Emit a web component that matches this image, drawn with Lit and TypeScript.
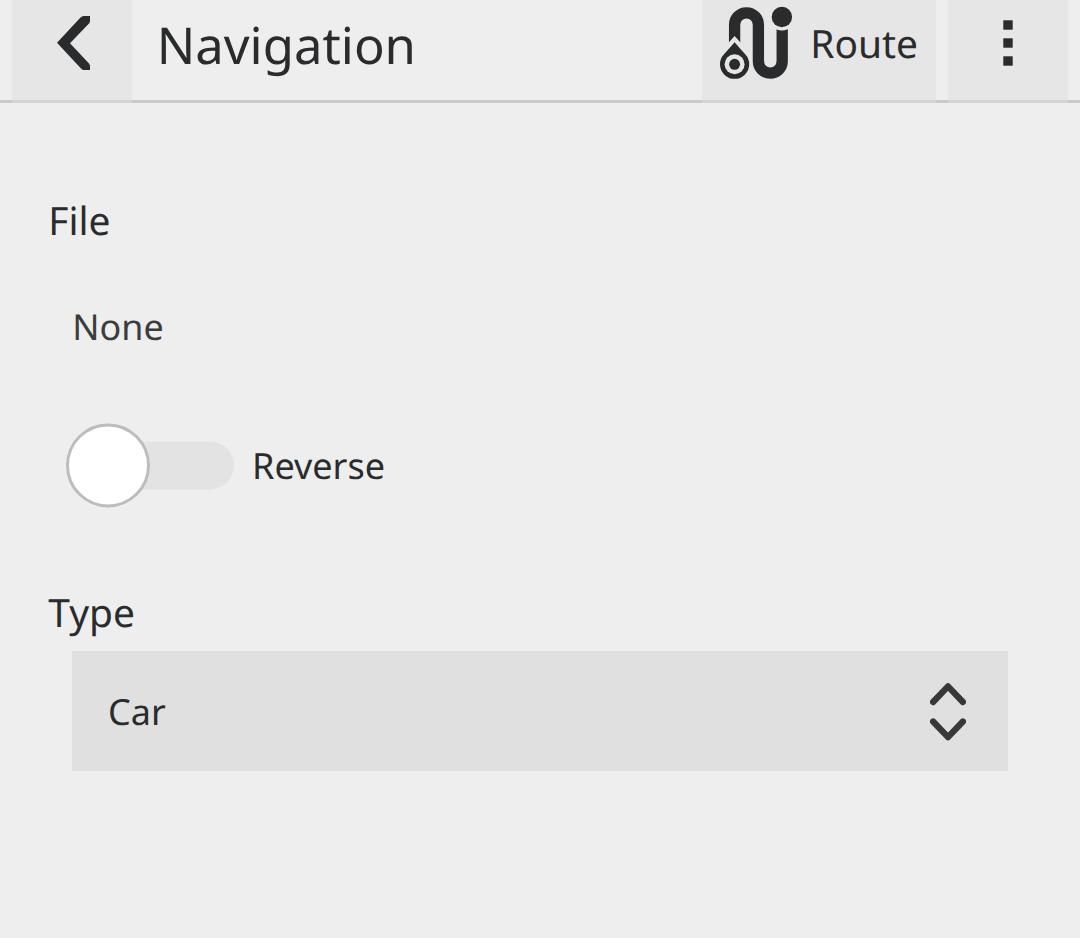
import { LitElement, html, css } from "lit";
import { customElement, property } from "lit/decorators.js";

const backIcon = html`<svg width="120" height="100" viewBox="0 0 120 100">
  <path d="M78 16H71.5Q70 16 68.500 17.500L45 42.700L69 68.500Q70.500 70 72 70H78V65.500L77 63.500L58 43.200L77.500 23L78 21Z" fill="#292b2c"/>
</svg>`;

const routeIcon = html`<svg width="92" height="100" viewBox="0 0 92 100">
  <path d="M32.600 43V24.700a11.900 11.900 0 0 1 23.800 0V61.300a11.900 11.900 0 0 0 23.800 0V28" fill="none" stroke="#292b2c" stroke-width="11.300"/>
  <path d="M24 45.400L32.600 36L41.200 45.400V50H24Z" fill="#e6e6e6"/>
  <path d="M32.600 42.300Q37 47.500 43.200 54.200A14.600 14.600 0 1 1 22 54.200Q28.200 47.500 32.600 42.300Z" fill="#292b2c"/>
  <circle cx="32.600" cy="64.300" r="10" fill="#e6e6e6"/>
  <circle cx="32.600" cy="64.300" r="5.500" fill="#292b2c"/>
  <circle cx="79.900" cy="17" r="13.500" fill="#e6e6e6"/>
  <circle cx="79.900" cy="17" r="10.200" fill="#292b2c"/>
</svg>`;

const moreIcon = html`<svg width="120" height="100" viewBox="0 0 120 100" fill="#292b2c">
  <rect x="55.300" y="20.300" width="9.400" height="9.400"/>
  <rect x="55.300" y="38.300" width="9.400" height="9.400"/>
  <rect x="55.300" y="56.300" width="9.400" height="9.400"/>
</svg>`;

const sortIcon = html`<svg width="36" height="60" viewBox="0 0 36 60" fill="none" stroke="#363839" stroke-width="6.300" stroke-linecap="round" stroke-linejoin="round">
  <path d="M3.100 21L18 5.400L32.900 21"/>
  <path d="M3.100 40.500L18 56.200L32.900 40.500"/>
</svg>`;

@customElement("tool-button")
class ToolButton extends LitElement {
  static styles = css`
    :host {
      display: flex;
      box-sizing: border-box;
      height: 103px;
      background: #e6e6e6;
      border-bottom: 3px solid #d3d3d3;
      overflow: hidden;
    }
  `;
  render() {
    return html`<slot></slot>`;
  }
}

@customElement("toggle-switch")
class ToggleSwitch extends LitElement {
  @property() label = "";
  static styles = css`
    :host { display: flex; align-items: center; height: 84px; }
    svg { display: block; flex: none; }
    .label { margin-left: 18px; padding-top: 1px; font-size: 36px; line-height: 50px; }
  `;
  render() {
    return html`<svg width="168" height="85" viewBox="0 0 168 85">
        <rect x="40" y="18.400" width="128" height="48" rx="24" fill="#e3e3e3"/>
        <circle cx="42" cy="42.400" r="40.500" fill="#fff" stroke="#bdbdbd" stroke-width="3"/>
      </svg>
      <span class="label">${this.label}</span>`;
  }
}

@customElement("app-root")
class AppRoot extends LitElement {
  static styles = css`
    :host {
      display: block;
      height: 938px;
      overflow: hidden;
      background: #eee;
      color: #292b2c;
      font-family: "Noto Sans", sans-serif;
      text-rendering: geometricPrecision;
    }
    svg { display: block; flex: none; }
    .header {
      display: flex;
      box-sizing: border-box;
      height: 103px;
      padding: 0 12px;
      background: linear-gradient(#eee 100px, #cacaca 100px);
    }
    .title {
      flex: 1;
      margin: 0 0 0 24.700px;
      font-size: 50.800px;
      font-weight: 400;
      line-height: 89px;
    }
    .back { width: 120px; }
    .route { width: 234px; }
    .route-label { margin-left: 16.300px; font-size: 38.900px; line-height: 88px; }
    .more { width: 120px; margin-left: 12px; }
    .form { padding: 90px 72px 0 48px; }
    .heading { margin: 0; padding-left: 0.300px; font-size: 38.900px; font-weight: 400; line-height: 56px; }
    .value { margin: 53px 0 0 24.300px; font-size: 35.900px; line-height: 50px; color: #3a3c3d; }
    toggle-switch { margin: 71px 0 0 18px; }
    .type { margin-top: 78px; }
    .select {
      display: flex;
      align-items: center;
      justify-content: space-between;
      height: 120px;
      margin: 10px 0 0 24px;
      padding: 0 42px 0 36px;
      box-sizing: border-box;
      background: #e0e0e0;
      font-size: 36px;
    }
  `;

  render() {
    return html`
      <header class="header">
        <tool-button class="back">${backIcon}</tool-button>
        <h1 class="title">Navigation</h1>
        <tool-button class="route">
          ${routeIcon}
          <span class="route-label">Route</span>
        </tool-button>
        <tool-button class="more">${moreIcon}</tool-button>
      </header>
      <main class="form">
        <h2 class="heading">File</h2>
        <div class="value">None</div>
        <toggle-switch label="Reverse"></toggle-switch>
        <h2 class="heading type">Type</h2>
        <div class="select">
          <span>Car</span>
          ${sortIcon}
        </div>
      </main>
    `;
  }
}
